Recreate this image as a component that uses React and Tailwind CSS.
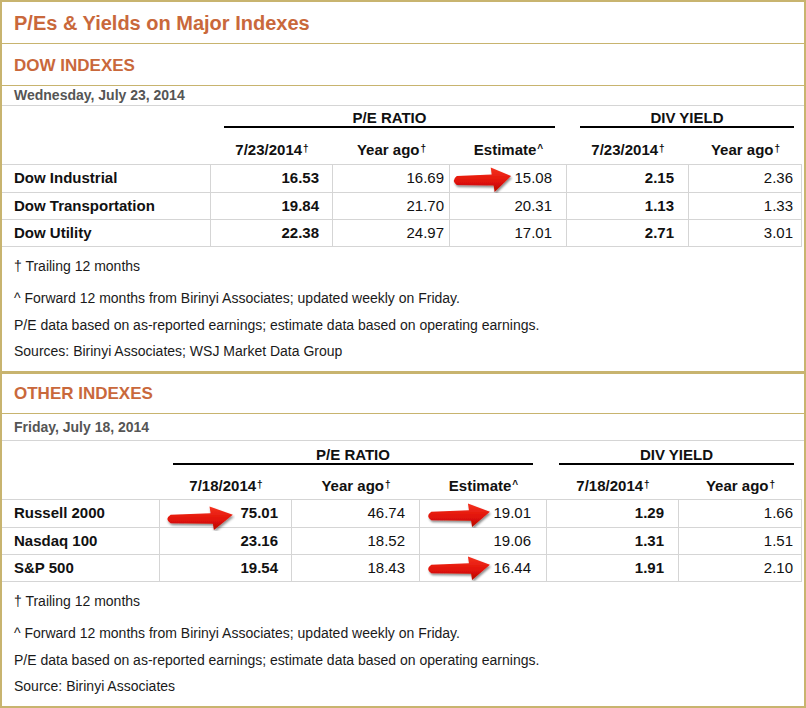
import React from "react";

const GOLD = "border-[#c8b46f]";

function Arrow({ className }) {
  return (
    <svg
      className={"absolute z-10 pointer-events-none " + className}
      viewBox="0 0 64 26"
      preserveAspectRatio="none"
    >
      <defs>
        <linearGradient id="arrowFill" x1="0" y1="0" x2="0" y2="1">
          <stop offset="0" stopColor="#f5321f" />
          <stop offset="0.6" stopColor="#e01208" />
          <stop offset="1" stopColor="#b50a04" />
        </linearGradient>
        <filter id="arrowShadow" x="-20%" y="-30%" width="140%" height="170%">
          <feDropShadow dx="1" dy="2" stdDeviation="1.2" floodColor="#000" floodOpacity="0.45" />
        </filter>
      </defs>
      <path
        d="M6,9 L42,7.5 L41,0.5 L62,9 L45,25 L44,18.5 L6,18 Q0,13.5 6,9 Z"
        fill="url(#arrowFill)"
        filter="url(#arrowShadow)"
      />
    </svg>
  );
}

const dowTable = {
  cols: "grid-cols-[209px_122px_117px_117px_122px_113px]",
  groupPe: "col-span-3 ml-[13px] mr-[12px]",
  groupDiv: "col-span-2 ml-[13px] mr-[8px]",
  groupRow: "h-[22px] pt-[4px]",
  headRow: "h-[36px] pt-[8px]",
  date: "7/23/2014",
  pads: ["pr-[13px]", "pr-[5px]", "pr-[14px]", "pr-[14px]", "pr-[8px]"],
  rows: [
    ["Dow Industrial", "16.53", "16.69", "15.08", "2.15", "2.36"],
    ["Dow Transportation", "19.84", "21.70", "20.31", "1.13", "1.33"],
    ["Dow Utility", "22.38", "24.97", "17.01", "2.71", "3.01"],
  ],
  // keys are row-valueColumn (0 = first number column)
  arrows: {
    "0-2": "left-[1px] top-[2px] w-[62px] h-[26px]",
  },
};

const otherTable = {
  cols: "grid-cols-[158px_132px_128px_127px_132px_123px]",
  groupPe: "col-span-3 ml-[13px] mr-[14px]",
  groupDiv: "col-span-2 ml-[12px] mr-[8px]",
  groupRow: "h-[24px] pt-[6px]",
  headRow: "h-[34px] pt-[8px]",
  date: "7/18/2014",
  pads: ["pr-[13px]", "pr-[14px]", "pr-[15px]", "pr-[14px]", "pr-[8px]"],
  rows: [
    ["Russell 2000", "75.01", "46.74", "19.01", "1.29", "1.66"],
    ["Nasdaq 100", "23.16", "18.52", "19.06", "1.31", "1.51"],
    ["S&P 500", "19.54", "18.43", "16.44", "1.91", "2.10"],
  ],
  arrows: {
    "0-0": "left-[4px] top-[6px] w-[71px] h-[25px]",
    "0-2": "left-[5px] top-[3px] w-[67px] h-[25px]",
    "2-2": "left-[5px] top-[1px] w-[67px] h-[25px]",
  },
};

function Sup({ children }) {
  return <sup className="text-[10px] font-bold relative -top-[3px] ml-[1px]">{children}</sup>;
}

function IndexTable({ t }) {
  return (
    <div className="w-[800px] text-[15px] text-[#111]">
      <div className={"grid " + t.cols + " " + t.groupRow}>
        <div />
        <div className={t.groupPe + " border-b-2 border-black text-center font-bold leading-[16px]"}>
          P/E RATIO
        </div>
        <div className={t.groupDiv + " border-b-2 border-black text-center font-bold leading-[16px]"}>
          DIV YIELD
        </div>
      </div>
      <div className={"grid items-center font-bold text-center " + t.cols + " " + t.headRow}>
        <div />
        <div>
          {t.date}
          <Sup>†</Sup>
        </div>
        <div>
          Year ago<Sup>†</Sup>
        </div>
        <div>
          Estimate<Sup>^</Sup>
        </div>
        <div>
          {t.date}
          <Sup>†</Sup>
        </div>
        <div>
          Year ago<Sup>†</Sup>
        </div>
      </div>
      <div className="border-b border-[#d5d5d5]">
        {t.rows.map((row, i) => (
          <div
            key={row[0]}
            className={
              "grid border-t border-[#d5d5d5] " + t.cols + " " + (i === 0 ? "h-[28px]" : "h-[27px]")
            }
          >
            <div className="flex items-center pl-3 font-bold border-r border-[#d5d5d5]">{row[0]}</div>
            {row.slice(1).map((v, j) => (
              <div
                key={j}
                className={
                  "relative flex items-center justify-end border-r border-[#d5d5d5] " +
                  t.pads[j] +
                  (j === 0 || j === 3 ? " font-bold" : "")
                }
              >
                {t.arrows[i + "-" + j] && <Arrow className={t.arrows[i + "-" + j]} />}
                {v}
              </div>
            ))}
          </div>
        ))}
      </div>
    </div>
  );
}

function Notes({ source }) {
  return (
    <div className="pl-3 pt-[11px] pb-[12px] text-[14px] leading-[16px] text-[#1a1a1a]">
      <p>† Trailing 12 months</p>
      <p className="mt-[16px]">^ Forward 12 months from Birinyi Associates; updated weekly on Friday.</p>
      <p className="mt-[11px]">P/E data based on as-reported earnings; estimate data based on operating earnings.</p>
      <p className="mt-[10px]">{source}</p>
    </div>
  );
}

export default function App() {
  return (
    <div
      className={"w-[806px] h-[708px] bg-white border-2 " + GOLD}
      style={{ fontFamily: '"Liberation Sans", Arial, sans-serif' }}
    >
      <div className={"h-[42px] border-b flex items-center pl-3 " + GOLD}>
        <h1 className="text-[20px] font-bold text-[#c9683b]">P/Es &amp; Yields on Major Indexes</h1>
      </div>

      {/* Dow */}
      <div className={"border-b-[3px] " + GOLD}>
        <div className={"h-[42px] border-b flex items-center pl-3 pt-[3px] " + GOLD}>
          <h2 className="text-[17px] font-bold text-[#c9683b]">DOW INDEXES</h2>
        </div>
        <div className="h-[20px] border-b border-[#d5d5d5] flex items-center pl-3">
          <span className="text-[14px] font-bold text-[#555]">Wednesday, July 23, 2014</span>
        </div>
        <IndexTable t={dowTable} />
        <Notes source="Sources: Birinyi Associates; WSJ Market Data Group" />
      </div>

      {/* Other */}
      <div className={"h-[40px] border-b flex items-center pl-3 " + GOLD}>
        <h2 className="text-[17px] font-bold text-[#c9683b]">OTHER INDEXES</h2>
      </div>
      <div className="h-[27px] border-b border-[#d5d5d5] flex items-center pl-3">
        <span className="text-[14px] font-bold text-[#555]">Friday, July 18, 2014</span>
      </div>
      <IndexTable t={otherTable} />
      <Notes source="Source: Birinyi Associates" />
    </div>
  );
}
